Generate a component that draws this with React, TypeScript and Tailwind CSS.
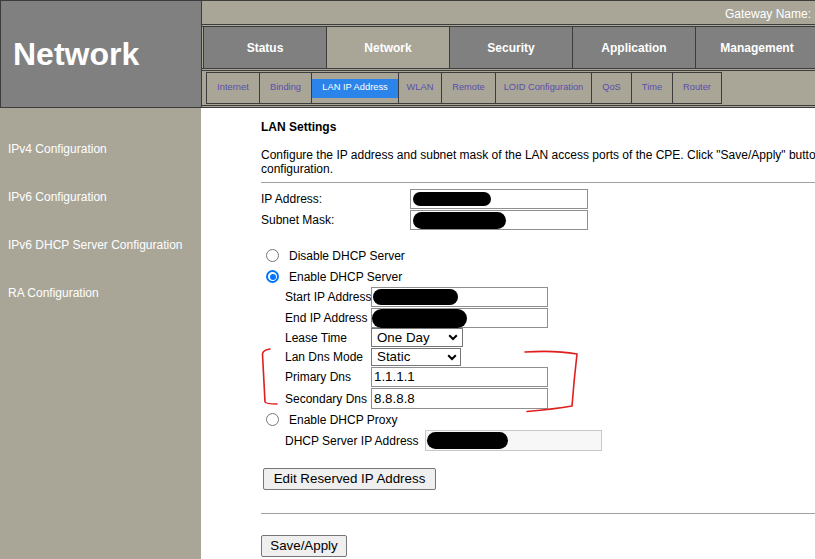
import React from "react";

function Radio({ checked }: { checked?: boolean }) {
  if (checked) {
    return (
      <div className="w-[13px] h-[13px] rounded-full border-2 border-[#0075ff] bg-white flex items-center justify-center shrink-0">
        <div className="w-[6px] h-[6px] rounded-full bg-[#0075ff]" />
      </div>
    );
  }
  return <div className="w-[13px] h-[13px] rounded-full border border-[#767676] bg-white shrink-0" />;
}

function Chevron() {
  return (
    <svg width="10" height="7" viewBox="0 0 10 7" className="shrink-0">
      <polyline points="1.2,1.2 5,5 8.8,1.2" fill="none" stroke="#000" strokeWidth="2" />
    </svg>
  );
}

function Blob({ cls }: { cls: string }) {
  return <div className={cls} />;
}

function Header() {
  const tab = "h-full flex items-center justify-center text-[12px] font-bold text-white border-r border-[#3c3c3c] shrink-0";
  const sub = "h-full border-y border-r border-[#3c3c3c] flex items-center justify-center text-[9.3px] text-[#5a4eaa] shrink-0 whitespace-nowrap";
  return (
    <div className="flex h-[108px] border-t border-b border-[#3c3c3c] bg-[#a9a698]">
      <div className="w-[202px] shrink-0 bg-[#808080] border-l border-r border-[#3c3c3c] flex items-center pl-[12px]">
        <span className="text-[32px] font-bold text-white leading-none">Network</span>
      </div>
      <div className="flex-1 min-w-0 flex flex-col">
        <div className="h-[23px] flex items-center pl-[523px] pt-[3px] text-[12px] text-white whitespace-nowrap">
          Gateway Name:&nbsp;
        </div>
        <div className="h-px bg-[#3c3c3c]" />
        <div className="h-px" />
        <div className="flex h-[43px] border-y border-[#3c3c3c] pl-px whitespace-nowrap">
          <div className={`${tab} w-[124px] border-l bg-[#808080]`}>Status</div>
          <div className={`${tab} w-[123px] bg-[#a9a698]`}>Network</div>
          <div className={`${tab} w-[123px] bg-[#808080]`}>Security</div>
          <div className={`${tab} w-[123px] bg-[#808080]`}>Application</div>
          <div className={`${tab} w-[123px] bg-[#808080]`}>Management</div>
        </div>
        <div className="h-px" />
        <div className="flex h-[36px] border-y border-[#3c3c3c] pl-[4px] py-px">
          <div className={`${sub} w-[54px] border-l`}>Internet</div>
          <div className={`${sub} w-[52px]`}>Binding</div>
          <div className={`${sub} w-[87px]`}>
            <div className="w-full h-[19px] bg-[#2b84ea] text-white flex items-center justify-center">LAN IP Address</div>
          </div>
          <div className={`${sub} w-[43px]`}>WLAN</div>
          <div className={`${sub} w-[54px]`}>Remote</div>
          <div className={`${sub} w-[96px]`}>LOID Configuration</div>
          <div className={`${sub} w-[40px]`}>QoS</div>
          <div className={`${sub} w-[41px]`}>Time</div>
          <div className={`${sub} w-[49px]`}>Router</div>
        </div>
      </div>
    </div>
  );
}

function Sidebar() {
  const items = ["IPv4 Configuration", "IPv6 Configuration", "IPv6 DHCP Server Configuration", "RA Configuration"];
  return (
    <div className="w-[201px] shrink-0 bg-[#a9a698] pt-[17px]">
      {items.map((t) => (
        <div key={t} className="h-[48px] flex items-center pl-[8px] text-[12px] text-white whitespace-nowrap">
          {t}
        </div>
      ))}
    </div>
  );
}

function Content() {
  const input = "h-[20px] border border-[#8f8f8f] bg-white flex items-center shrink-0";
  return (
    <div className="flex-1 min-w-0 pl-[60px] text-[12px] leading-[14px]">
      <div className="mt-[12px] h-[14px] font-bold whitespace-nowrap">LAN Settings</div>
      <div className="mt-[14px] w-[640px]">
        Configure the IP address and subnet mask of the LAN access ports of the CPE. Click "Save/Apply" button to save the configuration.
      </div>
      <div className="mt-[6px] h-px w-[700px] bg-[#a0a0a0]" />

      <div className="mt-[6px] flex h-[21px]">
        <div className="w-[149px] h-[20px] flex items-center">IP Address:</div>
        <div className={`${input} w-[178px]`}>
          <Blob cls="ml-[2px] w-[78px] h-[14px] rounded-full bg-black" />
        </div>
      </div>
      <div className="flex h-[21px]">
        <div className="w-[149px] h-[20px] flex items-center">Subnet Mask:</div>
        <div className={`${input} w-[178px]`}>
          <Blob cls="ml-[2px] w-[93px] h-[17px] rounded-full bg-black" />
        </div>
      </div>

      <div className="mt-[14px] flex h-[21px] items-center pl-[5px] gap-[10px]">
        <Radio />
        <span>Disable DHCP Server</span>
      </div>
      <div className="flex h-[21px] items-center pl-[5px] gap-[10px]">
        <Radio checked />
        <span>Enable DHCP Server</span>
      </div>

      <div className="pl-[24px]">
        <div className="flex h-[21px]">
          <div className="w-[86px] h-[20px] flex items-center whitespace-nowrap">Start IP Address</div>
          <div className={`${input} w-[177px]`}>
            <Blob cls="ml-[1px] w-[85px] h-[16px] rounded-full bg-black" />
          </div>
        </div>
        <div className="flex h-[20px]">
          <div className="w-[86px] h-[20px] flex items-center whitespace-nowrap">End IP Address</div>
          <div className={`${input} w-[177px]`}>
            <Blob cls="w-[95px] h-[19px] rounded-full bg-black" />
          </div>
        </div>
        <div className="flex h-[20px]">
          <div className="w-[86px] h-[19px] flex items-center whitespace-nowrap">Lease Time</div>
          <div className="w-[92px] h-[19px] border border-[#767676] bg-white flex items-center justify-between pl-[5px] pr-[4px] text-[13.33px] leading-none">
            <span>One Day</span>
            <Chevron />
          </div>
        </div>
        <div className="flex h-[19px]">
          <div className="w-[86px] h-[18px] flex items-center whitespace-nowrap">Lan Dns Mode</div>
          <div className="w-[90px] h-[18px] border border-[#767676] bg-white flex items-center justify-between pl-[5px] pr-[3px] text-[13.33px] leading-none">
            <span>Static</span>
            <Chevron />
          </div>
        </div>
        <div className="flex h-[21px]">
          <div className="w-[86px] h-[20px] flex items-center whitespace-nowrap">Primary Dns</div>
          <div className={`${input} w-[177px] pl-[2px] text-[13.33px] leading-none`}>1.1.1.1</div>
        </div>
        <div className="flex h-[21px]">
          <div className="w-[86px] h-[21px] flex items-center whitespace-nowrap">Secondary Dns</div>
          <div className="h-[21px] w-[177px] border border-[#8f8f8f] bg-white flex items-center pl-[2px] text-[13.33px] leading-none">8.8.8.8</div>
        </div>
      </div>

      <div className="flex h-[21px] items-center pl-[5px] gap-[10px]">
        <Radio />
        <span>Enable DHCP Proxy</span>
      </div>
      <div className="pl-[24px] flex h-[21px]">
        <div className="w-[140px] h-[21px] flex items-center whitespace-nowrap">DHCP Server IP Address</div>
        <div className="w-[177px] h-[21px] border border-[#c8c8c8] bg-[#f7f7f7] flex items-center">
          <Blob cls="ml-[1px] w-[81px] h-[17px] rounded-full bg-black" />
        </div>
      </div>

      <div className="mt-[17px] ml-[2px] h-[22px] w-[173px] border border-[#767676] rounded-[2px] bg-[#efefef] flex items-center justify-center text-[13.33px] leading-none whitespace-nowrap">
        Edit Reserved IP Address
      </div>
      <div className="mt-[23px] h-px w-[700px] bg-[#a0a0a0]" />
      <div className="mt-[21px] h-[22px] w-[86px] border border-[#767676] rounded-[2px] bg-[#efefef] flex items-center justify-center text-[13.33px] leading-none whitespace-nowrap">
        Save/Apply
      </div>
    </div>
  );
}

function Annotation() {
  return (
    <svg className="absolute left-0 top-0 pointer-events-none" width="815" height="559" viewBox="0 0 815 559">
      <path d="M270 349 Q263 350 262.5 354 L265 402 Q266 404 277 404" fill="none" stroke="#e01e1e" strokeWidth="1.6" strokeLinecap="round" />
      <path d="M525 352 Q555 350 577 354 Q574 380 572 406 Q555 409 527 411.5" fill="none" stroke="#e01e1e" strokeWidth="1.6" strokeLinecap="round" />
    </svg>
  );
}

export default function App() {
  return (
    <div className="w-[815px] h-[559px] overflow-hidden bg-white relative font-['Liberation_Sans',Arial,sans-serif] text-black">
      <Header />
      <div className="flex h-[451px]">
        <Sidebar />
        <Content />
      </div>
      <Annotation />
    </div>
  );
}
